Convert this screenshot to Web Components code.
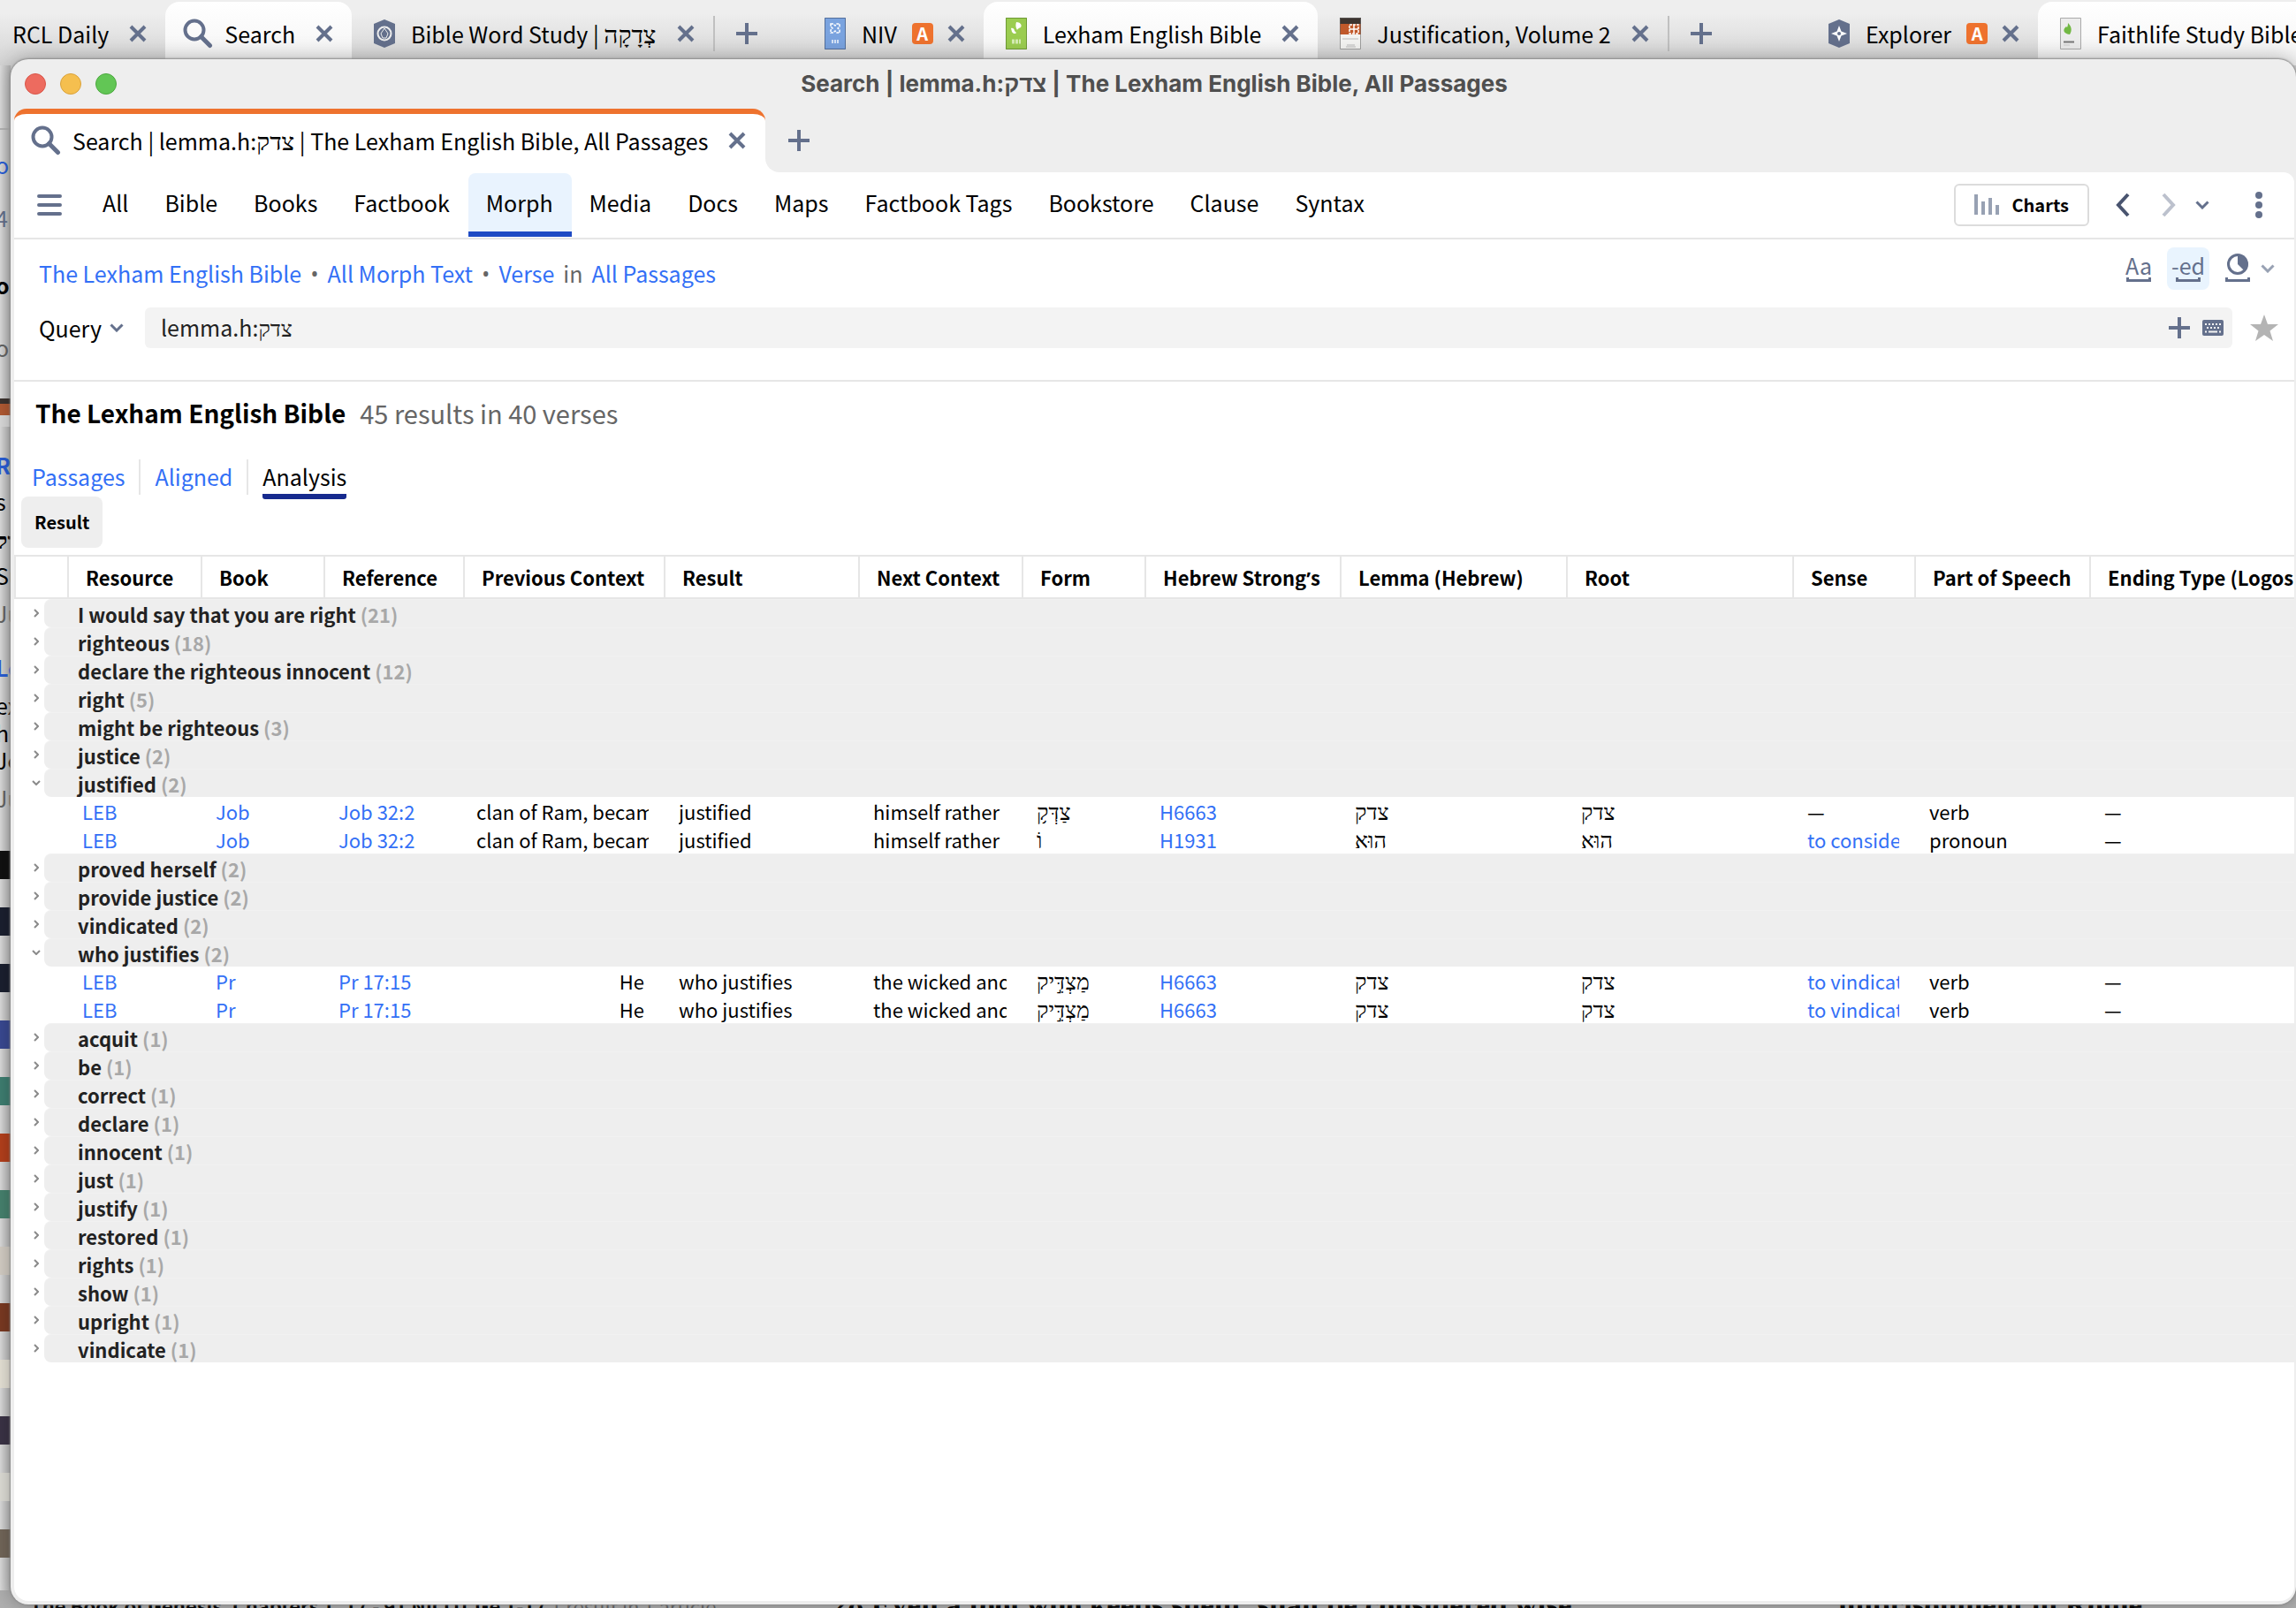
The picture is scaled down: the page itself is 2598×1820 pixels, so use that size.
<!DOCTYPE html>
<html lang="en">
<head>
<meta charset="utf-8">
<title>Search | lemma.h:צדק</title>
<style>
  html, body { height: 100%; margin: 0; }
  body {
    --slate: #64708c;
    --link: #3370f6;
    --line: #e6e6e6;
    --panel: #eeeeee;
    font-family: "Noto Sans CJK SC", "Liberation Serif", sans-serif;
    font-size: 25px;
    line-height: 36px;
    color: #000;
    overflow: hidden;
  }
  doc-tab bdi { font-size: 28px; line-height: 28px; }
</style>
</head>
<body>
<logos-desktop>
  <back-window slot="back"></back-window>
  <search-window>
    <span slot="title">Search | lemma.h:צדק | The Lexham English Bible, All Passages</span>
    <doc-tab slot="tabs" icon="search" class="accent"><span>Search | lemma.h:<bdi>צדק</bdi> | The Lexham English Bible, All Passages</span></doc-tab>
    <search-toolbar></search-toolbar>
    <search-query></search-query>
    <search-results></search-results>
  </search-window>
</logos-desktop>

<script>
// every icon is drawn here, name -> [width, height, svg body]
const ICONS = {
  search: [34, 34, '<circle cx="13" cy="13" r="10.500" fill="none" stroke="currentColor" stroke-width="4"/><path d="M20.500 20.500 30.500 30.500" stroke="currentColor" stroke-width="5" stroke-linecap="round"/>'],
  close: [20, 20, '<path d="M2 2 18 18M18 2 2 18" stroke="currentColor" stroke-width="4"/>'],
  plus: [24, 24, '<path d="M12 0V24M0 12H24" stroke="currentColor" stroke-width="4"/>'],
  study: [26, 34, '<path d="M13 1 25 6V28L13 33 1 28V6Z" fill="currentColor"/><circle cx="13" cy="17" r="7.500" fill="none" stroke="#eee" stroke-width="2"/><path d="M13 11 17 17 15 22H11L9 17Z" fill="currentColor" stroke="#eee" stroke-width="1"/>'],
  explorer: [26, 34, '<path d="M13 1 25 6V28L13 33 1 28V6Z" fill="currentColor"/><path d="M13 8 15.500 14.500 22 17 15.500 19.500 13 26 10.500 19.500 4 17 10.500 14.500Z" fill="#fff"/><circle cx="13" cy="17" r="2" fill="currentColor"/>'],
  niv: [24, 36, '<path d="M0 0H24V36H0Z" fill="#7aa3df"/><path d="M.5 .5H23.500V35.500H.5Z" fill="none" stroke="#54709c"/><path d="M7 7h3l2 2 2-2h3v3l-2 2 2 2v3h-3l-2-2-2 2H7v-3l2-2-2-2Z" fill="none" stroke="#fff" stroke-width="1.500" stroke-dasharray="3 1"/><path d="M8 27h8" stroke="#d5e3f7" stroke-width="4" stroke-dasharray="2 1"/>'],
  leb: [24, 36, '<path d="M0 0H24V36H0Z" fill="#9bcd50"/><path d="M.5 .5H23.500V35.500H.5Z" fill="none" stroke="#6f9a37"/><path d="M12 5c4 0 7 3 5 6-2 1-3 1-4 3-2-3-2-6-1-9Z" fill="#fff"/><path d="M6 12c2-1 4 1 4 3l2 2c-1 2-4 1-5-1Z" fill="#fff"/><path d="M7 27h10" stroke="#d6edb4" stroke-width="5" stroke-dasharray="3 1"/>'],
  justification: [24, 36, '<path d="M0 0H24V36H0Z" fill="#f4f4f2"/><path d="M0 0H24V7H0Z" fill="#3d3430"/><path d="M0 7H24V19H0Z" fill="#c0592b"/><path d="M11 8h10v10H11Z" fill="none" stroke="#fff" stroke-width="1.500" stroke-dasharray="3 1"/><path d="M16 8v10M11 13h10" stroke="#fff" stroke-width="1.500"/><path d="M3 24h18M8 31h9M7 33h11" stroke="#bbb"/><path d="M.5 .5H23.500V35.500H.5Z" fill="none" stroke="#666" stroke-opacity=".6"/>'],
  fsb: [24, 36, '<path d="M.5 .5H23.500V35.500H.5Z" fill="#ececec" stroke="#aaa"/><path d="M9 6c4 4 5 8 2 13C3 18 3 13 7 10c1 2 2 0 2-4Z" fill="#72b844"/><path d="M4 27.500h12" stroke="#777" stroke-width="2"/><path d="M4 31h7" stroke="#ccc"/>'],
  menu: [28, 26, '<path d="M2 3H26M2 13H26M2 23H26" stroke="currentColor" stroke-width="4" stroke-linecap="round"/>'],
  bars: [28, 24, '<path d="M2 0V23M10 8V23M18 4V23M26 12V23" stroke="currentColor" stroke-width="4"/>'],
  back: [16, 28, '<path d="M14 2 3 14 14 26" fill="none" stroke="currentColor" stroke-width="4"/>'],
  forward: [16, 28, '<path d="M2 2 13 14 2 26" fill="none" stroke="currentColor" stroke-width="4"/>'],
  chevron: [16, 10, '<path d="M1.500 1.500 8 8 14.500 1.500" fill="none" stroke="currentColor" stroke-width="3"/>'],
  more: [8, 30, '<circle cx="4" cy="4" r="4" fill="currentColor"/><circle cx="4" cy="15" r="4" fill="currentColor"/><circle cx="4" cy="26" r="4" fill="currentColor"/>'],
  bracket: [28, 5, '<path d="M1.500 0V3.500H26.500V0" fill="none" stroke="currentColor" stroke-width="3"/>'],
  contrast: [26, 26, '<circle cx="13" cy="13" r="10.500" fill="none" stroke="currentColor" stroke-width="3"/><path d="M13 2A11 11 0 0 1 21 21L13 13Z" fill="currentColor"/>'],
  keyboard: [24, 18, '<rect width="24" height="18" rx="2" fill="currentColor"/><path d="M3 5h18M5 9h14" stroke="#f3f3f3" stroke-width="2" stroke-dasharray="2 2"/><path d="M3 13.500h2M7 13.500h10M19 13.500h2" stroke="#f3f3f3" stroke-width="2"/>'],
  star: [32, 30, '<path d="M16 0 20 11H32L22.500 18.500 26 30 16 23 6 30 9.500 18.500 0 11H12Z" fill="currentColor"/>'],
  closed: [6, 10, '<path d="M1 1 5 5 1 9" fill="none" stroke="currentColor" stroke-width="2"/>'],
  open: [10, 6, '<path d="M1 1 5 5 9 1" fill="none" stroke="currentColor" stroke-width="2"/>'],
};

const RESET = `
  * { box-sizing: border-box; }
  button, input, select { font: inherit; color: inherit; border: 0; padding: 0; margin: 0; background: none; }
  button { display: inline-flex; align-items: center; justify-content: center; }
  a { color: var(--link); text-decoration: none; }
  doc-tab bdi { font-size: 28px; line-height: 28px; }
`;

class BaseElement extends HTMLElement {
  constructor() {
    super();
    this.attachShadow({ mode: "open" });
  }
  connectedCallback() {
    this.shadowRoot.innerHTML = `<style>${RESET}</style>` + this.render();
  }
}

class LogosIcon extends BaseElement {
  render() {
    const [w, h, body] = ICONS[this.getAttribute("name")];
    return `<style>:host { display: inline-flex; flex: none; }</style>
      <svg width="${w}" height="${h}" viewBox="0 0 ${w} ${h}" aria-hidden="true">${body}</svg>`;
  }
}

// one document tab: icon, title from the slot, optional "A" badge, close button
class DocTab extends BaseElement {
  render() {
    const icon = this.getAttribute("icon");
    return `
      <style>
        :host { display: flex; align-items: center; flex: none; padding: 0 21px 0 20px; white-space: nowrap; }
        :host(.active) { background: linear-gradient(#fff, #f4f4f4); border-radius: 16px 16px 0 0; }
        :host(.plain) { padding-left: 14px; }
        :host(.accent) { background: #fff; border-top: 6px solid #ee722e; border-radius: 14px 14px 0 0; padding: 0 22px 6px 19px; }
        .icon { width: 34px; display: flex; justify-content: center; margin-right: 13px; color: var(--slate); }
        .badge { width: 24px; height: 24px; margin-left: 17px; border-radius: 4px; background: #ee722e; color: #fff; font-size: 20px; line-height: 24px; font-weight: 700; text-align: center; }
        button { margin-left: 23px; color: var(--slate); }
        .badge + button { margin-left: 16px; }
      </style>
      ${icon ? `<span class="icon"><logos-icon name="${icon}"></logos-icon></span>` : ""}
      <slot></slot>
      ${this.hasAttribute("badge") ? '<span class="badge">A</span>' : ""}
      <button aria-label="Close tab"><logos-icon name="close"></logos-icon></button>`;
  }
}

class LogosDesktop extends BaseElement {
  render() {
    return `
      <style>
        :host { display: grid; height: 100vh; grid-template: minmax(0, 1fr) / minmax(0, 1fr); overflow: hidden; }
        ::slotted(*), slot { grid-area: 1 / 1; }
        .front { grid-area: 1 / 1; display: grid; min-height: 0; padding: 67px 0 4px 12px; }
      </style>
      <slot name="back"></slot>
      <div class="front"><slot></slot></div>`;
  }
}

// the window that lies behind: its tab strip, a sliver of its list, and its last line
class BackWindow extends BaseElement {
  render() {
    const covers = ["#111", "#1b2030", "#1b2030", "#3a4a93", "#3f7f72", "#b5401c", "#47836f", "#d5cfc6", "#7b3a22", "#e8e4d8", "#3b3346", "#e0dfd8", "#73675a"];
    return `
      <style>
        :host { display: grid; grid-template-rows: 74px minmax(0, 1fr) 20px; overflow: hidden; background: #d2d2d2; }
        .strip { display: grid; grid-template-columns: 908fr 1136fr 554fr; padding-top: 2px; background: linear-gradient(#eeeeee 20%, #d4d4d4); }
        .pane { display: flex; min-width: 0; overflow: hidden; }
        .new { align-self: center; height: 40px; border-left: 2px solid #c0c0c0; padding-left: 24px; color: var(--slate); }
        .sliver { width: 12px; overflow: hidden; white-space: nowrap; background: linear-gradient(90deg, #dedede, #b4b4b4); display: flex; flex-direction: column; }
        .sliver p { margin: 0; height: 35px; line-height: 35px; flex: none; text-indent: -5px; }
        .tools { height: 73px; flex: none; border-bottom: 2px solid #b5b5b5; }
        .link { color: #2a5fd8; }
        .dim { color: #666; }
        .sliver .tight { height: 31px; }
        .cover { height: 32px; margin-bottom: 32px; flex: none; }
        .foot { display: grid; grid-template-columns: 930fr 1150fr 518fr; background: #b0b0b0; white-space: nowrap; font-size: 22px; line-height: 34px; }
        .foot div { overflow: hidden; padding-left: 34px; }
        .foot .verse { padding-left: 12px; font: 700 35px/34px "Liberation Serif", serif; }
        .foot .last { padding-left: 0; font: 700 35px/34px "Liberation Serif", serif; }
      </style>
      <div class="strip">
        <div class="pane">
          <doc-tab class="plain">RCL Daily</doc-tab>
          <doc-tab class="active" icon="search">Search</doc-tab>
          <doc-tab icon="study"><span>Bible Word Study | <bdi>צְדָקָה</bdi></span></doc-tab>
          <button class="new" aria-label="New tab"><logos-icon name="plus"></logos-icon></button>
        </div>
        <div class="pane">
          <doc-tab icon="niv" badge>NIV</doc-tab>
          <doc-tab class="active" icon="leb">Lexham English Bible</doc-tab>
          <doc-tab icon="justification">Justification, Volume 2</doc-tab>
          <button class="new" aria-label="New tab"><logos-icon name="plus"></logos-icon></button>
        </div>
        <div class="pane">
          <doc-tab icon="explorer" badge>Explorer</doc-tab>
          <doc-tab class="active" icon="fsb">Faithlife Study Bible</doc-tab>
        </div>
      </div>
      <div class="sliver">
        <div class="tools"></div>
        <p style="margin-top: 22px" class="link">ou</p>
        <p style="margin-top: 25px; color: var(--slate)">4</p>
        <p style="margin-top: 41px"><b>ou</b></p>
        <p style="margin-top: 36px" class="dim">o</p>
        <div class="cover" style="margin: 40px 0 0; background: linear-gradient(#3d3430 20%, #b35b34 20% 60%, #ddd 60%)"></div>
        <p style="margin-top: 26px" class="link"><b>Ri</b></p>
        <p style="margin-top: 6px">s</p>
        <p style="margin-top: 8px"><b>דק</b></p>
        <p style="margin-top: 6px">Su</p>
        <p style="margin-top: 8px" class="dim">Ju</p>
        <p style="margin-top: 26px" class="link"><b>Le</b></p>
        <p class="tight" style="margin-top: 8px">ex</p>
        <p class="tight">h</p>
        <p class="tight">Je</p>
        <p class="tight dim" style="margin-top: 12px">Ju</p>
        <div style="height: 46px; flex: none"></div>
        ${covers.map(c => `<div class="cover" style="background:${c}"></div>`).join("")}
      </div>
      <div class="foot">
        <div><b>The Book of Genesis, Chapters 1–17 - 91 NICOT Ge 1-17</b> <span class="dim">1 result in 1 article</span></div>
        <div class="verse">28 Even a fool who keeps silent, shall be considered wise,</div>
        <div class="last">imprisonment in Rome</div>
      </div>`;
  }
}

class SearchWindow extends BaseElement {
  render() {
    return `
      <style>
        :host { display: flex; flex-direction: column; min-width: 0; min-height: 0; background: var(--panel); border-radius: 20px; padding: 0 2px 4px 4px; overflow: hidden; box-shadow: 0 0 2px 1px #8c8c8c, 0 0 24px rgba(0, 0, 0, .3); }
        header { display: grid; grid-template-columns: 1fr auto 1fr; align-items: center; height: 56px; padding: 0 12px; }
        .lights { display: flex; gap: 16px; }
        .lights button { width: 24px; height: 24px; border-radius: 50%; background: #ed6b5f; border: 1px solid #d85548; }
        .lights button + button { background: #f5bf4f; border-color: #d9a23c; }
        .lights button + button + button { background: #62c655; border-color: #4ca83f; }
        h1 { margin: 0; font: 700 26px/36px Inter, "Liberation Sans", sans-serif; color: #4f4f4f; }
        .tabs { display: flex; height: 72px; }
        .curve { width: 20px; background: #fff; }
        .curve::before { content: ""; display: block; height: 100%; background: var(--panel); border-radius: 0 0 0 16px; }
        .new { color: var(--slate); padding: 0 6px; }
        main { flex: 1; min-height: 0; background: #fff; border-radius: 0 12px 16px 16px; overflow: hidden; }
      </style>
      <header>
        <div class="lights"><button aria-label="Close"></button><button aria-label="Minimize"></button><button aria-label="Zoom"></button></div>
        <h1><slot name="title"></slot></h1>
      </header>
      <div class="tabs"><slot name="tabs"></slot><span class="curve"></span>
        <button class="new" aria-label="New tab"><logos-icon name="plus"></logos-icon></button></div>
      <main><slot></slot></main>`;
  }
}

class SearchToolbar extends BaseElement {
  render() {
    const kinds = ["All", "Bible", "Books", "Factbook", "Morph", "Media", "Docs", "Maps", "Factbook Tags", "Bookstore", "Clause", "Syntax"];
    return `
      <style>
        :host { display: flex; align-items: center; height: 74px; padding: 0 36px 0 26px; border-bottom: 2px solid var(--line); color: var(--slate); }
        nav { display: flex; height: 72px; flex: 1; margin-left: 26px; }
        nav button { padding: 0 21px 6px 20px; color: #000; }
        nav .on { background: #e9f3fe; border-radius: 8px 8px 0 0; border-bottom: 6px solid #1f4bc4; padding-bottom: 0; }
        .charts { height: 48px; padding: 0 21px; gap: 14px; border: 2px solid #dcdcdc; border-radius: 6px; font-size: 20px; font-weight: 700; color: #000; margin-right: 30px; }
        .charts logos-icon { color: #98a1b3; }
        .back { color: #49546f; margin-right: 36px; }
        .forward { color: #bcc1cd; margin-right: 22px; }
        .list { margin-right: 52px; }
      </style>
      <button aria-label="Menu"><logos-icon name="menu"></logos-icon></button>
      <nav>${kinds.map(k => `<button${k === "Morph" ? ' class="on"' : ""}>${k}</button>`).join("")}</nav>
      <button class="charts"><logos-icon name="bars"></logos-icon>Charts</button>
      <button class="back" aria-label="Back"><logos-icon name="back"></logos-icon></button>
      <button class="forward" aria-label="Forward"><logos-icon name="forward"></logos-icon></button>
      <button class="list" aria-label="History"><logos-icon name="chevron"></logos-icon></button>
      <button aria-label="More"><logos-icon name="more"></logos-icon></button>`;
  }
}

class SearchQuery extends BaseElement {
  render() {
    return `
      <style>
        :host { display: block; border-bottom: 2px solid var(--line); padding: 9px 18px 36px 28px; color: var(--slate); }
        .scope { display: flex; height: 68px; align-items: flex-start; }
        .crumbs { flex: 1; display: flex; gap: 10px; padding-top: 11px; color: #666; }
        .crumbs i { font-family: "Open Sans", sans-serif; font-style: normal; }
        .views { display: flex; align-items: center; padding-right: 4px; }
        .view { width: 48px; height: 48px; flex-direction: column; justify-content: flex-end; padding-bottom: 9px; line-height: 24px; border-radius: 8px; }
        .view + .view { margin-left: 8px; }
        .view logos-icon[name=bracket] { margin-top: 2px; }
        .on { background: #e9f4fe; }
        .views > :last-child { color: #98a1b3; margin-left: 2px; }
        .query { display: flex; align-items: center; }
        label { display: flex; align-items: center; gap: 8px; width: 120px; }
        select { appearance: none; color: #000; outline: none; }
        .box { flex: 1; display: flex; align-items: center; gap: 14px; height: 46px; padding: 0 10px 0 18px; margin-right: 20px; background: #f3f3f3; border-radius: 6px; }
        input { flex: 1; color: #222; outline: none; height: 42px; padding-bottom: 2px; }
        .star { color: #b4b4b4; }
      </style>
      <div class="scope">
        <div class="crumbs"><a href="#">The Lexham English Bible</a><i>•</i><a href="#">All Morph Text</a><i>•</i><a href="#">Verse</a>in<a href="#">All Passages</a></div>
        <div class="views">
          <button class="view">Aa<logos-icon name="bracket"></logos-icon></button>
          <button class="view on">-ed<logos-icon name="bracket"></logos-icon></button>
          <button class="view" aria-label="Visual filters"><logos-icon name="contrast"></logos-icon><logos-icon name="bracket"></logos-icon></button>
          <logos-icon name="chevron"></logos-icon>
        </div>
      </div>
      <div class="query">
        <label><select aria-label="Query type"><option>Query</option></select><logos-icon name="chevron"></logos-icon></label>
        <div class="box">
          <input aria-label="Query" value="lemma.h:צדק">
          <button aria-label="Add"><logos-icon name="plus"></logos-icon></button>
          <button aria-label="Keyboard"><logos-icon name="keyboard"></logos-icon></button>
        </div>
        <button class="star" aria-label="Favorite"><logos-icon name="star"></logos-icon></button>
      </div>`;
  }
}

class SearchResults extends BaseElement {
  render() {
    return `
      <style>
        :host { display: block; }
        .head { display: flex; align-items: center; gap: 16px; height: 72px; padding: 0 0 2px 24px; }
        h2 { margin: 0; font-size: 28px; font-weight: 700; }
        .count { font-size: 29px; color: #666; }
        .tabs { display: flex; align-items: flex-start; height: 58px; padding: 16px 0 0 20px; }
        .tabs a { height: 40px; line-height: 38px; }
        .tabs i { width: 2px; height: 40px; background: var(--line); margin: 0 16px; }
        .tabs .on { color: #000; height: 45px; border-bottom: 6px solid #162a8e; border-radius: 3px; }
        .group { height: 58px; margin: 0 0 8px 8px; padding: 0 15px; border-radius: 8px; background: var(--panel); font-size: 20px; font-weight: 700; }
      </style>
      <div class="head"><h2>The Lexham English Bible</h2><span class="count">45 results in 40 verses</span></div>
      <div class="tabs"><a href="#">Passages</a><i></i><a href="#">Aligned</a><i></i><a href="#" class="on">Analysis</a></div>
      <button class="group">Result</button>
      <analysis-table></analysis-table>`;
  }
}

const COLUMNS = [
  ["", 60], ["Resource", 151], ["Book", 139], ["Reference", 158], ["Previous Context", 227], ["Result", 220],
  ["Next Context", 185], ["Form", 139], ["Hebrew Strong<i>’</i>s", 221], ["Lemma (Hebrew)", 256], ["Root", 256],
  ["Sense", 138], ["Part of Speech", 198], ["Ending Type (Logos", 0],
];
// columns whose cells are links
const LINKS = [0, 1, 2, 7, 10];
// columns whose cells are Hebrew
const HEBREW = [6, 8, 9];

const GROUPS = [
  ["I would say that you are right", 21], ["righteous", 18], ["declare the righteous innocent", 12], ["right", 5],
  ["might be righteous", 3], ["justice", 2],
  ["justified", 2, [
    ["LEB", "Job", "Job 32:2", "clan of Ram, becam", "justified", "himself rather", "צַדְּק֥", "H6663", "צדק", "צדק", "—", "verb", "—"],
    ["LEB", "Job", "Job 32:2", "clan of Ram, becam", "justified", "himself rather", "וֹ", "H1931", "הוּא", "הוּא", "to consider", "pronoun", "—"],
  ]],
  ["proved herself", 2], ["provide justice", 2], ["vindicated", 2],
  ["who justifies", 2, [
    ["LEB", "Pr", "Pr 17:15", "He", "who justifies", "the wicked and", "מַצְדִּ֣יק", "H6663", "צדק", "צדק", "to vindicate", "verb", "—"],
    ["LEB", "Pr", "Pr 17:15", "He", "who justifies", "the wicked and", "מַצְדִּ֣יק", "H6663", "צדק", "צדק", "to vindicate", "verb", "—"],
  ]],
  ["acquit", 1], ["be", 1], ["correct", 1], ["declare", 1], ["innocent", 1], ["just", 1], ["justify", 1],
  ["restored", 1], ["rights", 1], ["show", 1], ["upright", 1], ["vindicate", 1],
];

class AnalysisTable extends BaseElement {
  cell(text, i) {
    if (LINKS.includes(i) && text !== "—") text = `<a href="#">${text}</a>`;
    if (HEBREW.includes(i)) text = `<bdi>${text}</bdi>`;
    const cls = i === 3 ? (text === "He" ? ' class="prev end"' : ' class="prev"') : "";
    return `<td${cls}><div>${text}</div></td>`;
  }
  group([name, count, rows]) {
    return `<tr><td class="group" colspan="${COLUMNS.length}"><div class="bar">
        <button aria-expanded="${!!rows}" aria-label="Toggle ${name}"><logos-icon name="${rows ? "open" : "closed"}"></logos-icon></button>
        <div class="name">${name} <span>(${count})</span></div></div></td></tr>`
      + (rows || []).map(r => `<tr><td></td>${r.map((t, i) => this.cell(t, i)).join("")}</tr>`).join("");
  }
  render() {
    return `
      <style>
        :host { display: block; font-size: 22px; line-height: 32px; }
        table { width: 100%; table-layout: fixed; border-collapse: separate; border-spacing: 0; }
        th { height: 50px; padding: 0 0 0 19px; border: solid var(--line); border-width: 2px 0 2px 2px; text-align: left; font-weight: 700; white-space: nowrap; overflow: hidden; }
        th i { font-family: "Open Sans", sans-serif; font-style: normal; }
        td { height: 32px; padding: 0 17px; white-space: nowrap; }
        td > div { height: 32px; overflow: hidden; }
        td bdi { font-size: 25px; line-height: 25px; }
        .prev { padding-left: 15px; }
        .end { text-align: right; padding-right: 22px; }
        .group { padding: 0; }
        .bar { display: flex; }
        .bar button { width: 34px; padding-left: 16px; color: #8a8a8a; }
        .name { flex: 1; height: 32px; padding-left: 38px; background: var(--panel); border-top: 1px solid #f1f1f1; border-radius: 8px 0 0 8px; font-weight: 700; color: #222; }
        .name span { color: #a8a8a8; }
      </style>
      <table>
        <colgroup>${COLUMNS.map(([, w]) => `<col${w ? ` style="width:${w}px"` : ""}>`).join("")}</colgroup>
        <thead><tr>${COLUMNS.map(([t]) => `<th>${t}</th>`).join("")}</tr></thead>
        <tbody>${GROUPS.map(g => this.group(g)).join("")}</tbody>
      </table>`;
  }
}

customElements.define("logos-icon", LogosIcon);
customElements.define("doc-tab", DocTab);
customElements.define("logos-desktop", LogosDesktop);
customElements.define("back-window", BackWindow);
customElements.define("search-window", SearchWindow);
customElements.define("search-toolbar", SearchToolbar);
customElements.define("search-query", SearchQuery);
customElements.define("search-results", SearchResults);
customElements.define("analysis-table", AnalysisTable);
</script>
</body>
</html>
